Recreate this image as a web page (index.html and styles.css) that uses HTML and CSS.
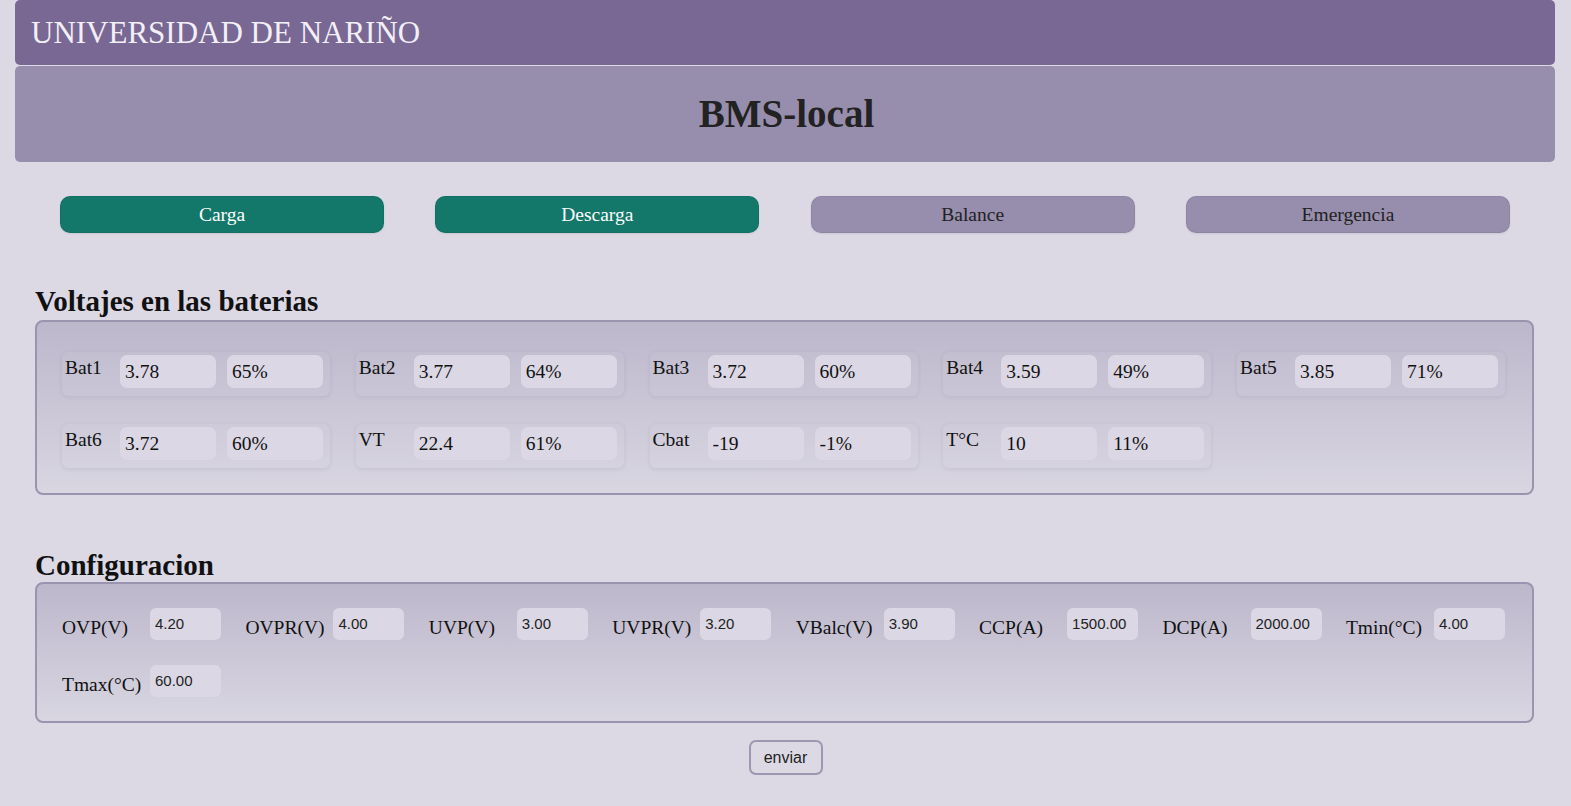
FILE: index.html
```html
<!DOCTYPE html>
<html lang="es">
<head>
<meta charset="utf-8">
<title>BMS-local</title>
<link rel="stylesheet" href="styles.css">
</head>
<body>
<div class="page">
  <header class="topbar"><h1 class="uni">UNIVERSIDAD DE NARIÑO</h1></header>
  <div class="subbar"><h2 class="title">BMS-local</h2></div>

  <div class="modes">
    <button class="mode on">Carga</button>
    <button class="mode on">Descarga</button>
    <button class="mode off">Balance</button>
    <button class="mode off">Emergencia</button>
  </div>

  <h3 class="section">Voltajes en las baterias</h3>
  <div class="panel volt">
    <div class="cell"><span class="lbl">Bat1</span><input class="vin" value="3.78" readonly><input class="vin" value="65%" readonly></div>
    <div class="cell"><span class="lbl">Bat2</span><input class="vin" value="3.77" readonly><input class="vin" value="64%" readonly></div>
    <div class="cell"><span class="lbl">Bat3</span><input class="vin" value="3.72" readonly><input class="vin" value="60%" readonly></div>
    <div class="cell"><span class="lbl">Bat4</span><input class="vin" value="3.59" readonly><input class="vin" value="49%" readonly></div>
    <div class="cell"><span class="lbl">Bat5</span><input class="vin" value="3.85" readonly><input class="vin" value="71%" readonly></div>
    <div class="cell"><span class="lbl">Bat6</span><input class="vin" value="3.72" readonly><input class="vin" value="60%" readonly></div>
    <div class="cell"><span class="lbl">VT</span><input class="vin" value="22.4" readonly><input class="vin" value="61%" readonly></div>
    <div class="cell"><span class="lbl">Cbat</span><input class="vin" value="-19" readonly><input class="vin" value="-1%" readonly></div>
    <div class="cell"><span class="lbl">T°C</span><input class="vin" value="10" readonly><input class="vin" value="11%" readonly></div>
  </div>

  <h3 class="section sec2">Configuracion</h3>
  <div class="panel conf">
    <div class="field"><span class="clbl">OVP(V)</span><input class="cin" value="4.20"></div>
    <div class="field"><span class="clbl">OVPR(V)</span><input class="cin" value="4.00"></div>
    <div class="field"><span class="clbl">UVP(V)</span><input class="cin" value="3.00"></div>
    <div class="field"><span class="clbl">UVPR(V)</span><input class="cin" value="3.20"></div>
    <div class="field"><span class="clbl">VBalc(V)</span><input class="cin" value="3.90"></div>
    <div class="field"><span class="clbl">CCP(A)</span><input class="cin" value="1500.00"></div>
    <div class="field"><span class="clbl">DCP(A)</span><input class="cin" value="2000.00"></div>
    <div class="field"><span class="clbl">Tmin(°C)</span><input class="cin" value="4.00"></div>
    <div class="field"><span class="clbl">Tmax(°C)</span><input class="cin" value="60.00"></div>
  </div>

  <div class="send"><button class="enviar">enviar</button></div>
</div>
</body>
</html>
```

FILE: styles.css
```css
* { box-sizing: border-box; }
html, body { margin: 0; padding: 0; }
body {
  background: #dcd9e5;
  font-family: "Liberation Serif", "Times New Roman", serif;
  color: #111;
}
.page {
  padding: 0 16px 0 15px;
}
.topbar {
  height: 65px;
  background: #786893;
  border-radius: 5px;
  padding: 17px 0 0 16px;
}
.uni {
  margin: 0;
  font-size: 31px;
  line-height: 1;
  font-weight: normal;
  color: #f3eff7;
}
.subbar {
  margin-top: 1px;
  height: 96px;
  background: #978eae;
  border-radius: 5px;
  padding-top: 28px;
  text-align: center;
}
.title {
  margin: 0;
  font-size: 39px;
  line-height: 1;
  font-weight: bold;
  color: #222;
  padding-left: 3px;
}
.modes {
  display: flex;
  justify-content: space-between;
  padding: 0 45px;
  margin-top: 34px;
}
.mode {
  flex: 0 0 324px;
  height: 37px;
  border-radius: 10px;
  border: 1px solid rgba(0,0,0,0.06);
  font-family: "Liberation Serif", "Times New Roman", serif;
  font-size: 19.5px;
  padding: 0;
  box-shadow: 0 1px 2px rgba(0,0,0,0.08);
}
.mode.on { background: #13786a; color: #fff; }
.mode.off { background: #978eae; color: #222; }

.section {
  margin: 51px 0 2px 20px;
  font-size: 29px;
  line-height: 34px;
  font-weight: bold;
  color: #111;
}
.section.sec2 { margin-top: 53px; margin-bottom: 0; }

.panel {
  margin: 0 21px 0 20px;
  border: 2px solid #9b94b1;
  border-radius: 8px;
  background: linear-gradient(#bcb7cb, #d9d6e2);
}
.volt {
  display: flex;
  flex-wrap: wrap;
  gap: 28px 25.75px;
  padding: 30px 20px 25px 25px;
}
.cell {
  width: 268px;
  display: flex;
  align-items: flex-start;
  padding: 3px 7px 8px 3px;
  border-radius: 6px;
  background: rgba(255,255,255,0.03);
  box-shadow: 0 1px 4px rgba(60,50,90,0.10);
}
.lbl {
  width: 55px;
  font-size: 19.5px;
  padding-top: 2px;
  color: #111;
}
.vin {
  width: 96px;
  height: 33px;
  border: none;
  border-radius: 7px;
  background: #dbd7e4;
  font-family: "Liberation Serif", "Times New Roman", serif;
  font-size: 19.5px;
  color: #111;
  padding: 0 5px;
  outline: none;
}
.vin + .vin { margin-left: 11px; }

.conf {
  display: flex;
  flex-wrap: wrap;
  gap: 25px 24.43px;
  padding: 24px 20px 24px 25px;
}
.field {
  display: flex;
  align-items: flex-start;
}
.clbl {
  width: 88px;
  font-size: 19.5px;
  margin-top: 9px;
  color: #111;
}
.cin {
  width: 71px;
  height: 32px;
  border: none;
  border-radius: 6px;
  background: #dbd7e4;
  font-family: "Liberation Sans", Arial, sans-serif;
  font-size: 15px;
  color: #222;
  padding: 6px 5px 8px;
  outline: none;
}
.send {
  text-align: center;
  margin-top: 17px;
  padding-left: 1px;
}
.enviar {
  width: 74px;
  height: 35px;
  border: 2px solid #9d97b0;
  border-radius: 7px;
  background: #dcd9e5;
  font-family: "Liberation Sans", Arial, sans-serif;
  font-size: 16px;
  color: #222;
  padding: 0;
}
```
